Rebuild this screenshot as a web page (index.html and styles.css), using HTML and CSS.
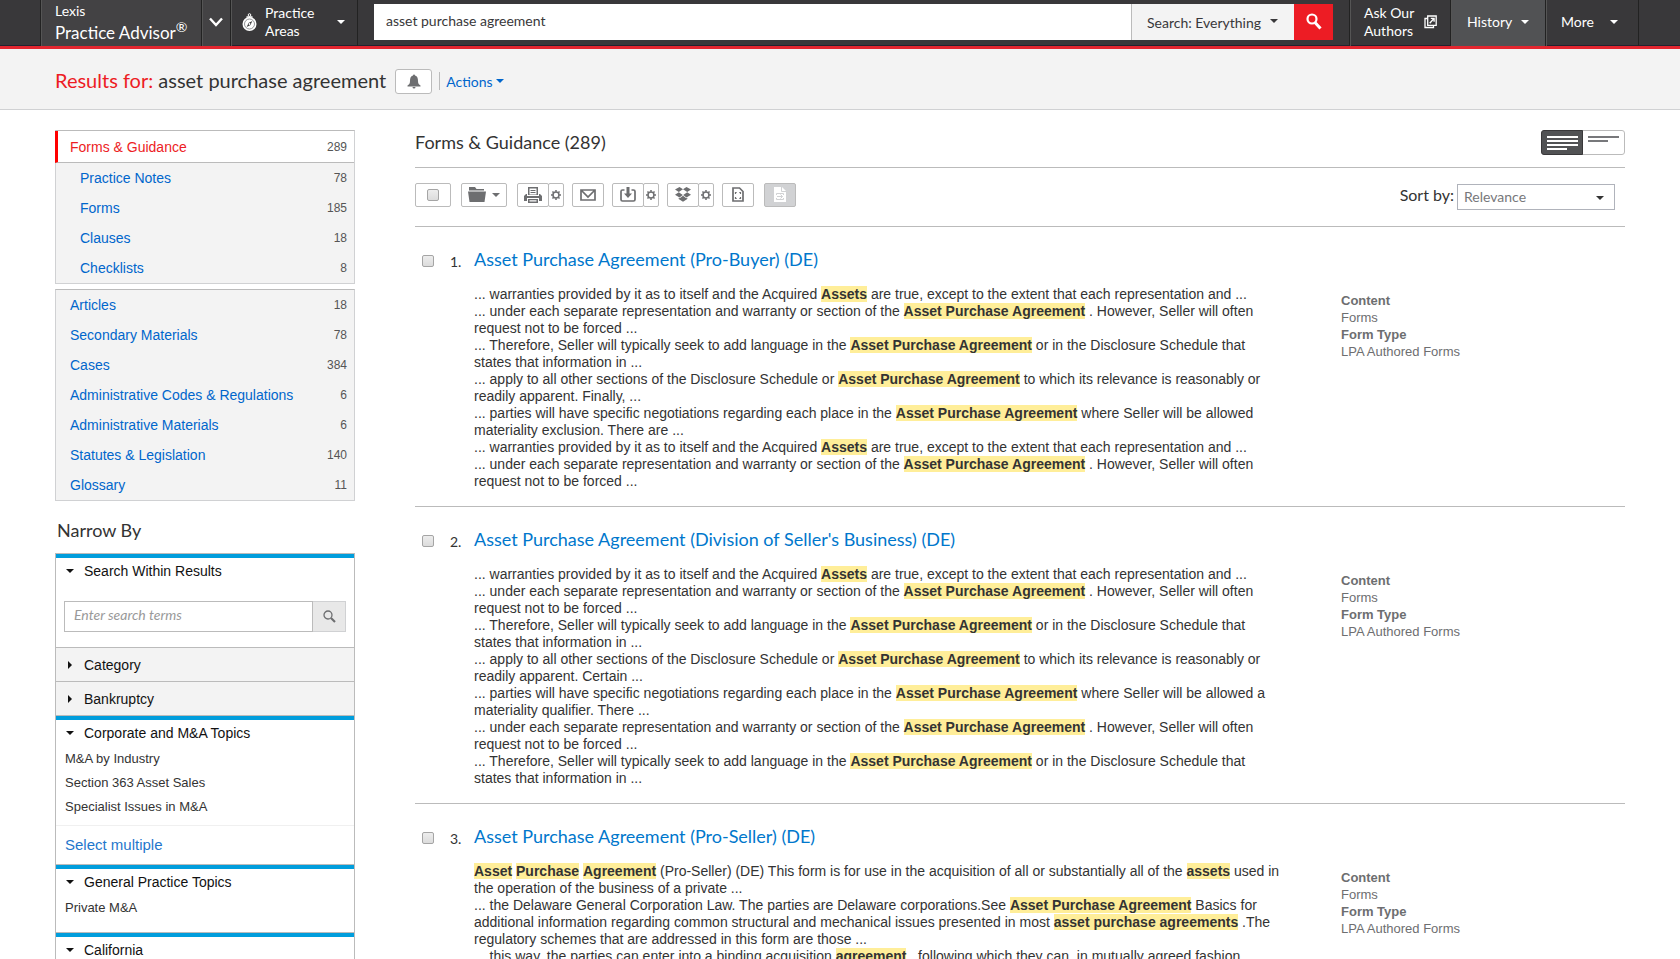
FILE: index.html
```html
<!DOCTYPE html>
<html lang="en">
  <head>
    <meta charset="UTF-8" />
    <meta name="viewport" content="width=device-width, initial-scale=1.0" />
    <title>Results for: asset purchase agreement</title>
    <link rel="stylesheet" href="styles.css">
  </head>
  <body>
    <header class="topbar">
      <a class="brand" href="#">
        <span class="brand-small">Lexis</span>
        <span class="brand-name">Practice Advisor<sup>®</sup></span>
      </a>
      <button class="brand-switch" aria-label="Switch product">
        <svg width="14" height="10" viewBox="0 0 14 10"><path d="M1 1.500 7 8l6-6.500" fill="none" stroke="#fff" stroke-width="2.400"/></svg>
      </button>
      <button class="nav-item practice">
        <svg width="15" height="18" viewBox="0 0 15 18">
          <circle cx="7.500" cy="2" r="1.300" fill="none" stroke="#fff" stroke-width="1"/>
          <path d="M4.500 4h6" stroke="#fff" stroke-width="1.500"/>
          <circle cx="7.500" cy="11" r="7" fill="#fff"/>
          <circle cx="7.500" cy="11" r="5" fill="none" stroke="#77787b" stroke-width=".8"/>
          <path d="m10.300 8-1.800 4L4.700 14l1.800-4z" fill="#39383a"/>
          <circle cx="7.500" cy="11" r=".9" fill="#fff"/>
        </svg>
        <span>Practice<br>Areas</span>
        <i class="caret"></i>
      </button>

      <form class="search">
        <input type="text" value="asset purchase agreement" aria-label="Search terms">
        <div class="scope">
          <select aria-label="Search scope">
            <option>Search: Everything</option>
          </select>
          <i class="caret"></i>
        </div>
        <button class="search-btn" aria-label="Search">
          <svg width="16" height="17" viewBox="0 0 16 17"><circle cx="6" cy="6" r="4.500" fill="none" stroke="#fff" stroke-width="2.200"/><path d="m9 9.500 5.500 6" stroke="#fff" stroke-width="3"/></svg>
        </button>
      </form>

      <a class="nav-item ask" href="#">
        <span>Ask Our<br>Authors</span>
        <svg width="13" height="14" viewBox="0 0 13 14" fill="none" stroke="#fff" stroke-width="1.300">
          <path d="M3.500 3.500H1v9h8.500v-2"/>
          <path d="M3.700 1h8.500v9.300H3.700z"/>
          <path d="M5.700 8.300 10 3.500M6.800 3.300h3.300v3.500"/>
        </svg>
      </a>
      <button class="nav-item history">History <i class="caret"></i></button>
      <button class="nav-item more">More <i class="caret"></i></button>
    </header>

    <section class="results-bar">
      <h1><span>Results for:</span> asset purchase agreement</h1>
      <button class="alert-btn" aria-label="Create alert">
        <svg width="14" height="15" viewBox="0 0 14 15" fill="#6d6e70"><path d="M6 1.500a1 1 0 0 1 2 0C10.500 2 11 4.500 11 7c0 2.500 1 3.700 2.500 4.500v1H.5v-1C2 10.700 3 9.500 3 7c0-2.500.5-5 3-5.500zM5.500 13h3a1.500 1.500 0 0 1-3 0z"/></svg>
      </button>
      <button class="actions">Actions <i class="caret"></i></button>
    </section>

    <div class="page">
      <aside class="sidebar">
        <ul class="facets">
          <li class="active"><a href="#">Forms &amp; Guidance</a><span>289</span></li>
          <li class="sub"><a href="#">Practice Notes</a><span>78</span></li>
          <li class="sub"><a href="#">Forms</a><span>185</span></li>
          <li class="sub"><a href="#">Clauses</a><span>18</span></li>
          <li class="sub"><a href="#">Checklists</a><span>8</span></li>
        </ul>
        <ul class="facets">
          <li><a href="#">Articles</a><span>18</span></li>
          <li><a href="#">Secondary Materials</a><span>78</span></li>
          <li><a href="#">Cases</a><span>384</span></li>
          <li><a href="#">Administrative Codes &amp; Regulations</a><span>6</span></li>
          <li><a href="#">Administrative Materials</a><span>6</span></li>
          <li><a href="#">Statutes &amp; Legislation</a><span>140</span></li>
          <li><a href="#">Glossary</a><span>11</span></li>
        </ul>

        <h2>Narrow By</h2>
        <div class="filters">
          <section class="filter open">
            <button class="filter-head"><i class="caret"></i>Search Within Results</button>
            <form class="within">
              <input type="text" placeholder="Enter search terms" aria-label="Search within results">
              <button aria-label="Search within results">
                <svg width="13" height="13" viewBox="0 0 13 13" fill="none" stroke="#6d6e70"><circle cx="5" cy="5" r="4" stroke-width="1.300"/><path d="m8 8 4 4" stroke-width="2.200"/></svg>
              </button>
            </form>
          </section>
          <section class="filter">
            <button class="filter-head"><i class="caret"></i>Category</button>
          </section>
          <section class="filter">
            <button class="filter-head"><i class="caret"></i>Bankruptcy</button>
          </section>
          <section class="filter open">
            <button class="filter-head"><i class="caret"></i>Corporate and M&amp;A Topics</button>
            <ul>
              <li><a href="#">M&amp;A by Industry</a></li>
              <li><a href="#">Section 363 Asset Sales</a></li>
              <li><a href="#">Specialist Issues in M&amp;A</a></li>
            </ul>
            <a class="multiple" href="#">Select multiple</a>
          </section>
          <section class="filter open">
            <button class="filter-head"><i class="caret"></i>General Practice Topics</button>
            <ul>
              <li><a href="#">Private M&amp;A</a></li>
            </ul>
          </section>
          <section class="filter open">
            <button class="filter-head"><i class="caret"></i>California</button>
          </section>
        </div>
      </aside>

      <main class="main">
        <div class="main-head">
          <h2>Forms &amp; Guidance (289)</h2>
          <div class="view-toggle">
            <button class="on" aria-label="Full view">
              <svg width="31" height="14" viewBox="0 0 31 14" fill="#fff"><path d="M0 0h31v2H0zM0 4h31v2H0zM0 8h31v2H0zM0 12h20v2H0z"/></svg>
            </button>
            <button aria-label="Title view">
              <svg width="31" height="14" viewBox="0 0 31 14" fill="#77787b"><path d="M0 0h31v2H0zM0 4h20v2H0z"/></svg>
            </button>
          </div>
        </div>

        <div class="toolbar">
          <label class="tool select-all"><input type="checkbox" aria-label="Select all"></label>
          <button class="tool folder" aria-label="Add to folder">
            <svg width="18" height="15" viewBox="0 0 18 15"><path d="M1 0h6l1.500 2H16v1.500H1zM0 4.500h18L16.500 15h-15z"/></svg>
            <i class="caret"></i>
          </button>
          <div class="tool-group">
            <button class="tool" aria-label="Print">
              <svg width="18" height="16" viewBox="0 0 18 16"><path d="M4 0h10v8H4zm1.500 1.500v6h7v-6z" fill-rule="evenodd"/><path d="M6.500 3h5v1h-5zM6.500 5h5v1h-5zM0 9l2-2h1v2h12V7h1l2 2v5h-3v-3H3v3H0zM4 12h10v4H4zm1.500 1.300v1.200h7v-1.200z" fill-rule="evenodd"/></svg>
            </button>
            <button class="tool gear" aria-label="Print options"><svg width="10" height="10" viewBox="0 0 11 11"><use href="#gear"/></svg></button>
          </div>
          <button class="tool email" aria-label="Email">
            <svg width="16" height="12" viewBox="0 0 16 12"><path d="M1 1h14v10H1zM1.500 1.500 8 8l6.500-6.500" fill="none" stroke="#6d6e70" stroke-width="1.700"/></svg>
          </button>
          <div class="tool-group">
            <button class="tool" aria-label="Download">
              <svg width="16" height="15" viewBox="0 0 16 15"><path d="M4.500 3H2.500Q1 3 1 4.500v8Q1 14 2.500 14h11q1.500 0 1.500-1.500v-8Q15 3 13.500 3h-2" fill="none" stroke="#6d6e70" stroke-width="1.700"/><path d="M6.500 0h3v6.500H12l-4 4.500-4-4.500h2.500z"/></svg>
            </button>
            <button class="tool gear" aria-label="Download options"><svg width="10" height="10" viewBox="0 0 11 11"><use href="#gear"/></svg></button>
          </div>
          <div class="tool-group">
            <button class="tool" aria-label="Dropbox">
              <svg width="16" height="15" viewBox="0 0 16 15"><path d="M4.500 0 8 2.300 3.800 5 0 2.500zM11.500 0 8 2.300 12.200 5 16 2.500zM3.800 5.200 7.800 8l-3.300 2.500L0 7.700zM12.200 5.200l-4 2.800 3.300 2.500L16 7.700zM8 8.800l3.300 2.500 1-.6v1.200L8 14.800l-4.300-2.900v-1.200l1 .6z"/></svg>
            </button>
            <button class="tool gear" aria-label="Dropbox options"><svg width="10" height="10" viewBox="0 0 11 11"><use href="#gear"/></svg></button>
          </div>
          <button class="tool" aria-label="Fit document">
            <svg width="12" height="15" viewBox="0 0 12 15" fill="none" stroke="#6d6e70"><path d="M1 1h6.500L11 4.500V14H1z" stroke-width="1.700"/><path d="M3.500 7V5.500h1.200M8.500 7V5.500H7.300M3.500 10v1.500h1.200M8.500 10v1.500H7.300" stroke-width="1.200"/></svg>
          </button>
          <button class="tool off" disabled aria-label="Export document">
            <svg width="12" height="15" viewBox="0 0 12 15"><path d="M0 0h8l4 4v11H0z" fill="#fff"/><path d="M7.500 0v4.500H12M2.500 8V6.500h7V8M2.500 11v1.500h7V11M3 9.500h5.500M6.500 7.500l2 2-2 2" fill="none" stroke="#d1d2d4"/></svg>
          </button>
          <label class="sort-label" for="sort">Sort by:</label>
          <div class="sort">
            <select id="sort">
              <option>Relevance</option>
            </select>
            <i class="caret"></i>
          </div>
        </div>

        <article class="result">
          <input type="checkbox" aria-label="Select result 1">
          <span class="num">1.</span>
          <div class="result-body">
            <h3><a href="#">Asset Purchase Agreement (Pro-Buyer) (DE)</a></h3>
            <div class="snippets">
              <p>... warranties provided by it as to itself and the Acquired <mark>Assets</mark> are true, except to the extent that each representation and ...</p>
              <p>... under each separate representation and warranty or section of the <mark>Asset Purchase Agreement</mark> . However, Seller will often request not to be forced ...</p>
              <p>... Therefore, Seller will typically seek to add language in the <mark>Asset Purchase Agreement</mark> or in the Disclosure Schedule that states that information in ...</p>
              <p>... apply to all other sections of the Disclosure Schedule or <mark>Asset Purchase Agreement</mark> to which its relevance is reasonably or readily apparent. Finally, ...</p>
              <p>... parties will have specific negotiations regarding each place in the <mark>Asset Purchase Agreement</mark> where Seller will be allowed materiality exclusion. There are ...</p>
              <p>... warranties provided by it as to itself and the Acquired <mark>Assets</mark> are true, except to the extent that each representation and ...</p>
              <p>... under each separate representation and warranty or section of the <mark>Asset Purchase Agreement</mark> . However, Seller will often request not to be forced ...</p>
            </div>
          </div>
          <dl>
            <dt>Content</dt>
            <dd>Forms</dd>
            <dt>Form Type</dt>
            <dd>LPA Authored Forms</dd>
          </dl>
        </article>

        <article class="result">
          <input type="checkbox" aria-label="Select result 2">
          <span class="num">2.</span>
          <div class="result-body">
            <h3><a href="#">Asset Purchase Agreement (Division of Seller's Business) (DE)</a></h3>
            <div class="snippets">
              <p>... warranties provided by it as to itself and the Acquired <mark>Assets</mark> are true, except to the extent that each representation and ...</p>
              <p>... under each separate representation and warranty or section of the <mark>Asset Purchase Agreement</mark> . However, Seller will often request not to be forced ...</p>
              <p>... Therefore, Seller will typically seek to add language in the <mark>Asset Purchase Agreement</mark> or in the Disclosure Schedule that states that information in ...</p>
              <p>... apply to all other sections of the Disclosure Schedule or <mark>Asset Purchase Agreement</mark> to which its relevance is reasonably or readily apparent. Certain ...</p>
              <p>... parties will have specific negotiations regarding each place in the <mark>Asset Purchase Agreement</mark> where Seller will be allowed a materiality qualifier. There ...</p>
              <p>... under each separate representation and warranty or section of the <mark>Asset Purchase Agreement</mark> . However, Seller will often request not to be forced ...</p>
              <p>... Therefore, Seller will typically seek to add language in the <mark>Asset Purchase Agreement</mark> or in the Disclosure Schedule that states that information in ...</p>
            </div>
          </div>
          <dl>
            <dt>Content</dt>
            <dd>Forms</dd>
            <dt>Form Type</dt>
            <dd>LPA Authored Forms</dd>
          </dl>
        </article>

        <article class="result">
          <input type="checkbox" aria-label="Select result 3">
          <span class="num">3.</span>
          <div class="result-body">
            <h3><a href="#">Asset Purchase Agreement (Pro-Seller) (DE)</a></h3>
            <div class="snippets">
              <p><mark>Asset</mark> <mark>Purchase</mark> <mark>Agreement</mark> (Pro-Seller) (DE) This form is for use in the acquisition of all or substantially all of the <mark>assets</mark> used in the operation of the business of a private ...</p>
              <p>... the Delaware General Corporation Law. The parties are Delaware corporations.See <mark>Asset Purchase Agreement</mark> Basics for additional information regarding common structural and mechanical issues presented in most <mark>asset purchase agreements</mark> .The regulatory schemes that are addressed in this form are those ...</p>
              <p>... this way, the parties can enter into a binding acquisition <mark>agreement</mark> , following which they can, in mutually agreed fashion,</p>
            </div>
          </div>
          <dl>
            <dt>Content</dt>
            <dd>Forms</dd>
            <dt>Form Type</dt>
            <dd>LPA Authored Forms</dd>
          </dl>
        </article>
      </main>
    </div>

    <!-- shared by the three option buttons in the toolbar -->
    <svg class="defs" width="0" height="0">
      <symbol id="gear" viewBox="0 0 11 11">
        <circle cx="5.500" cy="5.500" r="3.300" fill="none" stroke="#6d6e70" stroke-width="1.700"/>
        <path d="M5.500 0v2M5.500 9v2M0 5.500h2M9 5.500h2M1.600 1.600 3 3M8 8l1.400 1.400M1.600 9.400 3 8M8 3l1.400-1.400" stroke="#6d6e70" stroke-width="1.700"/>
      </symbol>
    </svg>
  </body>
</html>
```

FILE: styles.css
```css
* {
  box-sizing: border-box;
}

body {
  margin: 0;
  height: 100vh;
  overflow: hidden;
  font-family: "Liberation Sans", Arial, sans-serif;
  font-size: 14px;
  color: #333;
  background: #fff;
}

h1,
h2,
h3,
p,
ul,
dl,
dd {
  margin: 0;
  padding: 0;
  font-weight: normal;
}

ul {
  list-style: none;
}

a {
  color: #0066cc;
  text-decoration: none;
}

button,
input,
select {
  font: inherit;
  color: inherit;
  margin: 0;
  padding: 0;
  border: 0;
  border-radius: 0;
  background: none;
}

select {
  appearance: none;
}

svg {
  display: block;
  flex: none;
}

.defs {
  position: absolute;
}

.caret {
  flex: none;
  width: 8px;
  border: 4px solid transparent;
  border-top-color: currentColor;
  border-bottom: 0;
}

input[type="checkbox"] {
  appearance: none;
  width: 12px;
  height: 12px;
  border: 1px solid #a5a5a5;
  border-radius: 2px;
  background: linear-gradient(#ededed, #dcdcdc);
}

/* top bar */
.topbar {
  display: flex;
  height: 49px;
  padding: 0 41px 0 40px;
  border-bottom: 3px solid #e3262f;
  background: #39383a;
  box-shadow: inset 0 -1px #22232f;
  font-family: Lato, sans-serif;
  color: #fff;
}

.brand,
.brand-switch,
.nav-item {
  border-left: 1px solid #222;
  box-shadow: inset 1px 0 #555;
  color: #fff;
}

.brand {
  flex: none;
  width: 161px;
  padding: 2px 0 0 14px;
  background: #434244;
}

.brand-small,
.brand-name {
  display: block;
  line-height: 18px;
}

.brand-name {
  font-size: 17px;
  line-height: 26px;
  white-space: nowrap;
}

.brand-name sup {
  font-size: 14px;
  line-height: 0;
}

.brand-switch {
  display: flex;
  align-items: center;
  justify-content: center;
  width: 29px;
  padding-bottom: 2px;
  background: #434244;
}

.nav-item {
  display: flex;
  flex: none;
  align-items: center;
  padding-bottom: 2px;
  text-align: left;
  line-height: 18px;
}

.practice {
  width: 128px;
  padding-left: 11px;
  padding-right: 12px;
  gap: 8px;
  border-right: 1px solid #222;
}

.practice .caret {
  margin-left: auto;
}

.search {
  display: flex;
  flex: 1;
  height: 36px;
  margin: 4px 16px;
  color: #39383a;
}

.search input {
  flex: 1;
  min-width: 0;
  padding: 0 12px 3px;
  background: #fff;
}

.scope {
  position: relative;
  width: 163px;
  border-left: 1px solid #bbb;
  background: #f3f3f3;
}

.scope select {
  width: 100%;
  height: 36px;
  padding-left: 15px;
}

.scope .caret {
  position: absolute;
  top: 15px;
  right: 16px;
  pointer-events: none;
}

.search-btn {
  display: flex;
  align-items: center;
  justify-content: center;
  width: 39px;
  padding-bottom: 2px;
  background: #ed1c24;
}

.ask {
  width: 101px;
  padding-left: 14px;
  gap: 10px;
}

.history {
  width: 95px;
  padding-left: 16px;
  gap: 9px;
  background: #515254;
}

.more {
  width: 94px;
  padding-left: 15px;
  gap: 16px;
  border-right: 1px solid #222;
}

/* results title */
.results-bar {
  display: flex;
  align-items: center;
  height: 61px;
  padding: 4px 55px 0;
  border-bottom: 1px solid #d0d1d3;
  background: #f3f3f3;
  font-family: Lato, sans-serif;
}

.results-bar h1 {
  padding-bottom: 3px;
  font-size: 20px;
  line-height: 24px;
}

.results-bar h1 span {
  color: #ed1c24;
}

.alert-btn {
  display: flex;
  align-items: center;
  justify-content: center;
  width: 37px;
  height: 25px;
  margin: 0 7px 0 9px;
  border: 1px solid #bbb;
  border-radius: 3px;
  background: #fff;
}

.actions {
  display: flex;
  align-items: center;
  gap: 3px;
  height: 18px;
  padding-left: 6px;
  border-left: 1px solid #bbb;
  color: #0066cc;
}

.page {
  display: flex;
  gap: 60px;
  padding: 20px 55px 0;
}

/* left column */
.sidebar {
  flex: none;
  width: 300px;
}

.facets {
  margin-bottom: 5px;
  border: 1px solid #d0d1d3;
  border-top-color: #bbb;
  background: #f3f3f3;
}

.facets li {
  display: flex;
  align-items: center;
  justify-content: space-between;
  height: 30px;
  padding: 0 7px 0 14px;
}

.facets span {
  font-size: 12px;
  color: #555;
}

.facets .sub {
  padding-left: 24px;
}

.facets .active {
  height: 32px;
  margin-left: -1px;
  padding-left: 12px;
  border-left: 3px solid #ff0000;
  border-bottom: 1px solid #bbb;
  background: #fff;
}

.facets .active a {
  color: #ed1c24;
}

.sidebar h2,
.main-head h2 {
  font-family: Lato, sans-serif;
  font-size: 18px;
  line-height: 24px;
}

.sidebar h2 {
  margin: 17px 0 11px 2px;
}

.filters {
  border: 1px solid #bbb;
  border-top: 0;
}

.filter {
  border-top: 1px solid #bbb;
  background: #f3f3f3;
}

.filter-head {
  display: flex;
  align-items: center;
  gap: 10px;
  width: 100%;
  height: 33px;
  padding-left: 10px;
  color: #111;
}

.filter:not(.open) .caret {
  transform: rotate(-90deg);
}

.filter.open {
  background: #fff;
}

.filter.open .filter-head {
  height: 30px;
  border-top: 4px solid #009ddc;
}

.within {
  display: flex;
  height: 31px;
  margin: 17px 8px 15px;
}

.within input {
  flex: 1;
  min-width: 0;
  padding: 0 9px 4px;
  border: 1px solid #bbb;
  font-family: Lato, sans-serif;
}

.within input::placeholder {
  color: #999;
  font-style: italic;
}

.within button {
  display: flex;
  align-items: center;
  justify-content: center;
  width: 33px;
  border: 1px solid #d0d1d3;
  border-left: 0;
  background: #e8e8e8;
}

.filter ul {
  padding: 1px 9px 12px;
  font-size: 13px;
  line-height: 24px;
}

.filter li a {
  color: #333;
}

.multiple {
  display: block;
  margin-top: -6px;
  padding-left: 9px;
  border-top: 1px solid #f0f0f0;
  font-size: 15px;
  line-height: 38px;
  color: #1f77cc;
}

/* right column */
.main {
  flex: 1;
  min-width: 0;
}

.main-head {
  display: flex;
  align-items: flex-start;
  justify-content: space-between;
  height: 38px;
  border-bottom: 1px solid #bbb;
}

.view-toggle {
  display: flex;
  width: 84px;
  height: 25px;
  border: 1px solid #bbb;
  border-radius: 3px;
}

.view-toggle button {
  flex: 1;
  padding: 4px 5px;
}

.view-toggle .on {
  flex: none;
  width: 42px;
  margin: -1px 0 -1px -1px;
  border: 1px solid #39383a;
  border-radius: 3px 0 0 3px;
  background: #515254;
}

.toolbar {
  display: flex;
  align-items: center;
  height: 59px;
  padding: 0 10px 4px 0;
  border-bottom: 1px solid #bbb;
}

.tool {
  display: flex;
  align-items: center;
  justify-content: center;
  width: 32px;
  height: 24px;
  margin-right: 10px;
  padding-bottom: 1px;
  border: 1px solid #bbb;
  border-radius: 2px;
  color: #6d6e70;
  fill: #6d6e70;
}

.select-all {
  width: 36px;
  padding: 0;
}

.folder {
  gap: 6px;
  width: 46px;
}

.tool-group {
  display: flex;
  margin-right: 8px;
}

.tool-group .tool {
  margin: 0;
}

.tool-group .gear {
  width: 16px;
  margin-left: -1px;
}

.email {
  margin-right: 8px;
}

.off {
  background: #d1d2d4;
}

.sort-label {
  margin-left: auto;
  padding-bottom: 2px;
  font-family: Lato, sans-serif;
  font-size: 16px;
}

.sort {
  position: relative;
  margin: 4px 0 0 3px;
}

.sort select {
  width: 158px;
  height: 26px;
  padding: 0 0 1px 6px;
  border: 1px solid #b0b3bb;
  font-family: Lato, sans-serif;
  color: #77787b;
}

.sort .caret {
  position: absolute;
  top: 12px;
  right: 11px;
  pointer-events: none;
}

.result {
  display: flex;
  padding: 20px 0 16px 7px;
  border-bottom: 1px solid #bbb;
}

.result > input {
  flex: none;
  margin-top: 8px;
}

.num {
  width: 24px;
  margin: 3px 0 0 16px;
  font-family: Lato, sans-serif;
  line-height: 24px;
}

.result-body {
  flex: 1;
}

h3 {
  font-family: Lato, sans-serif;
  font-size: 18px;
  line-height: 24px;
}

h3 a {
  color: #0077cc;
}

.snippets {
  max-width: 810px;
  margin-top: 15px;
  line-height: 17px;
}

mark {
  background: #ffee99;
  color: #333;
  font-weight: bold;
}

dl {
  width: 284px;
  margin-top: 45px;
  font-size: 13px;
  line-height: 17px;
  color: #6d6e70;
}

dt {
  font-weight: bold;
}
```
